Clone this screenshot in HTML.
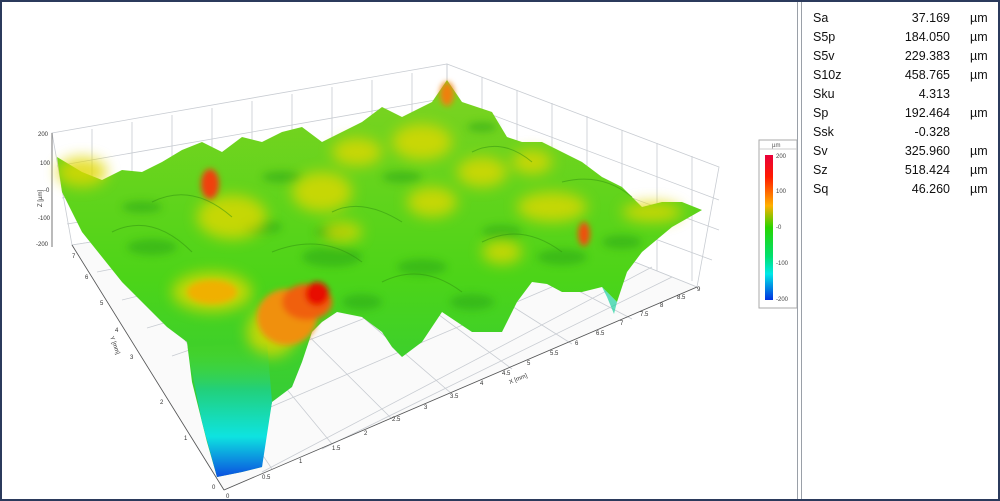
<!DOCTYPE html>
<html><head><meta charset="utf-8"><style>
html,body{margin:0;padding:0;background:#fff;}
#f{position:relative;width:996px;height:497px;border:2px solid #2b3a5c;overflow:hidden;font-family:"Liberation Sans",sans-serif;}
#div{position:absolute;left:795px;top:0;width:3px;height:497px;border-left:1px solid #9aa0a8;border-right:1px solid #9aa0a8;background:#fff;}
table{position:absolute;left:811px;top:6px;border-collapse:collapse;font-size:12.5px;color:#111;}
td{padding:0;height:19px;}
td.n{width:60px}td.v{width:77px;text-align:right}td.u{padding-left:20px}
</style></head><body><div id="f">
<svg width="796" height="497" viewBox="0 0 796 497" style="position:absolute;left:0;top:0">
<defs>
<linearGradient id="g" x1="0" y1="0" x2="0" y2="1"><stop offset="0" stop-color="#7ed321"/><stop offset="0.5" stop-color="#4cd418"/><stop offset="1" stop-color="#27c94a"/></linearGradient>
<linearGradient id="pit" x1="0" y1="0" x2="0" y2="1"><stop offset="0" stop-color="#5ad81f" stop-opacity="0"/><stop offset="0.35" stop-color="#22d07a"/><stop offset="0.7" stop-color="#0ee3e0"/><stop offset="1" stop-color="#0a4fe0"/></linearGradient>
<linearGradient id="cb" x1="0" y1="0" x2="0" y2="1"><stop offset="0" stop-color="#e8003a"/><stop offset="0.15" stop-color="#ff1a00"/><stop offset="0.35" stop-color="#ffb000"/><stop offset="0.5" stop-color="#28d400"/><stop offset="0.7" stop-color="#00e070"/><stop offset="0.82" stop-color="#00e8e8"/><stop offset="1" stop-color="#0030e0"/></linearGradient>
<filter id="b"><feGaussianBlur stdDeviation="7"/></filter>
<filter id="b2"><feGaussianBlur stdDeviation="3"/></filter>
<filter id="b3"><feGaussianBlur stdDeviation="4"/></filter>
</defs>
<g stroke="#c8ccd2" stroke-width="0.8" fill="none">
<polygon points="50,131 445,62 445,185 70,243"/>
<polygon points="445,62 717,165 695,285 445,185"/>
<polygon points="70,243 445,185 695,285 222,488" fill="#fafafa"/>
<path d="M90,127V240 M130,120V234 M170,113V228 M210,106V222 M250,99V216 M290,92V210 M330,85V204 M370,78V198 M410,71V191 M480,75V199 M515,88V213 M550,101V227 M585,114V241 M620,128V255 M655,141V269 M690,154V279"/>
<path d="M55,164L445,96L717,198 M60,196L445,128L717,228 M65,222L445,160L710,258"/>
<path d="M95,270L470,195 M120,298L495,205 M145,326L520,215 M170,354L545,225 M195,382L570,235 M210,430L620,255 M260,470L650,265 M320,447L670,275"/>
<path d="M270,467L110,230 M330,442L150,224 M390,417L190,218 M450,392L240,211 M510,367L290,204 M570,342L340,197 M630,317L390,191"/>
</g>
<g stroke="#555" stroke-width="0.8"><path d="M50,131V245 M222,488L695,285 M70,243L222,488"/></g>
<polygon fill="url(#g)" points="55,155 80,170 100,178 120,168 140,170 160,160 180,148 200,140 220,150 240,135 260,140 280,130 300,125 320,140 340,130 360,120 380,105 400,115 430,100 445,78 460,100 490,110 505,135 520,140 540,140 560,150 580,160 600,175 620,185 640,205 660,200 680,200 700,208 670,225 640,250 625,270 615,300 600,285 580,290 560,290 545,282 530,280 515,300 500,330 485,330 470,330 455,320 440,310 420,340 400,355 390,345 380,330 360,315 335,310 320,320 310,330 300,360 290,385 270,400 262,440 260,465 240,470 215,475 205,440 200,420 190,380 185,340 165,325 150,310 120,280 100,255 80,230 60,190"/>
<g filter="url(#b3)" fill="#2aa818" opacity="0.55">
<ellipse cx="150" cy="245" rx="25" ry="8"/><ellipse cx="260" cy="225" rx="20" ry="7"/><ellipse cx="330" cy="255" rx="30" ry="10"/><ellipse cx="330" cy="230" rx="18" ry="6"/><ellipse cx="420" cy="265" rx="25" ry="8"/><ellipse cx="500" cy="230" rx="20" ry="7"/><ellipse cx="560" cy="255" rx="25" ry="8"/><ellipse cx="620" cy="240" rx="20" ry="7"/><ellipse cx="400" cy="175" rx="20" ry="6"/><ellipse cx="280" cy="175" rx="20" ry="6"/><ellipse cx="480" cy="125" rx="15" ry="5"/><ellipse cx="140" cy="205" rx="20" ry="6"/><ellipse cx="360" cy="300" rx="20" ry="8"/><ellipse cx="470" cy="300" rx="22" ry="8"/>
</g>
<g filter="url(#b)" fill="#e0d800" opacity="0.8">
<ellipse cx="230" cy="215" rx="35" ry="22"/><ellipse cx="320" cy="190" rx="30" ry="20"/><ellipse cx="420" cy="140" rx="30" ry="18"/><ellipse cx="480" cy="170" rx="25" ry="15"/><ellipse cx="430" cy="200" rx="25" ry="15"/><ellipse cx="550" cy="205" rx="35" ry="15"/><ellipse cx="650" cy="210" rx="30" ry="10"/><ellipse cx="210" cy="290" rx="40" ry="20"/><ellipse cx="355" cy="150" rx="25" ry="14"/><ellipse cx="80" cy="170" rx="25" ry="15"/><ellipse cx="530" cy="160" rx="20" ry="12"/><ellipse cx="270" cy="330" rx="25" ry="25"/><ellipse cx="500" cy="250" rx="20" ry="12"/><ellipse cx="340" cy="230" rx="20" ry="10"/>
</g>
<g filter="url(#b2)">
<ellipse cx="208" cy="182" rx="9" ry="15" fill="#f04010"/>
<ellipse cx="285" cy="315" rx="30" ry="28" fill="#f09010"/>
<ellipse cx="305" cy="300" rx="25" ry="18" fill="#f06010"/>
<ellipse cx="315" cy="292" rx="12" ry="12" fill="#e81000"/>
<ellipse cx="445" cy="92" rx="7" ry="12" fill="#f08010"/>
<ellipse cx="582" cy="232" rx="6" ry="12" fill="#f05010"/>
<ellipse cx="210" cy="290" rx="25" ry="12" fill="#f0b000"/>
</g>
<polygon fill="url(#pit)" points="185,345 265,340 270,400 260,465 240,470 215,475 200,420"/>
<polygon fill="#1fd0a0" opacity="0.7" points="600,285 615,300 612,312 605,295" />
<g stroke="#2f9010" stroke-width="1" fill="none" opacity="0.5">
<path d="M110,230Q150,210 190,250 M270,250Q320,230 360,260 M380,280Q420,260 460,290 M480,240Q520,220 560,250 M150,200Q190,180 230,215 M330,210Q360,195 400,220 M470,150Q500,135 530,160 M560,180Q600,170 630,195"/>
</g>
<g font-size="6" fill="#333">
<text x="36" y="134">200</text><text x="38" y="163">100</text><text x="42" y="190">-0</text><text x="36" y="218">-100</text><text x="34" y="244">-200</text>
<text x="70" y="256">7</text><text x="83" y="277">6</text><text x="98" y="303">5</text><text x="113" y="330">4</text><text x="128" y="357">3</text><text x="158" y="402">2</text><text x="182" y="438">1</text><text x="210" y="487">0</text>
<text x="224" y="496">0</text><text x="260" y="477">0.5</text><text x="297" y="461">1</text><text x="330" y="448">1.5</text><text x="362" y="433">2</text><text x="390" y="419">2.5</text><text x="422" y="407">3</text><text x="448" y="396">3.5</text><text x="478" y="383">4</text><text x="500" y="373">4.5</text><text x="525" y="363">5</text><text x="548" y="353">5.5</text><text x="573" y="343">6</text><text x="594" y="333">6.5</text><text x="618" y="323">7</text><text x="638" y="314">7.5</text><text x="658" y="305">8</text><text x="675" y="297">8.5</text><text x="695" y="289">9</text>
<text x="508" y="382" transform="rotate(-22 508 382)">X [mm]</text>
<text x="108" y="335" transform="rotate(70 108 335)">Y [mm]</text>
<text x="40" y="205" transform="rotate(-90 40 205)">Z [µm]</text>
</g>
<rect x="757" y="138" width="38" height="168" fill="#fff" stroke="#aaa"/>
<line x1="757" y1="147" x2="795" y2="147" stroke="#ccc"/>
<text x="770" y="145" font-size="6" fill="#555">µm</text>
<rect x="763" y="153" width="8" height="145" fill="url(#cb)"/>
<g font-size="6" fill="#444"><text x="774" y="156">200</text><text x="774" y="191">100</text><text x="774" y="227">-0</text><text x="774" y="263">-100</text><text x="774" y="299">-200</text></g>
</svg>
<div id="div"></div>
<table>
<tr><td class="n">Sa</td><td class="v">37.169</td><td class="u">µm</td></tr>
<tr><td class="n">S5p</td><td class="v">184.050</td><td class="u">µm</td></tr>
<tr><td class="n">S5v</td><td class="v">229.383</td><td class="u">µm</td></tr>
<tr><td class="n">S10z</td><td class="v">458.765</td><td class="u">µm</td></tr>
<tr><td class="n">Sku</td><td class="v">4.313</td><td class="u"></td></tr>
<tr><td class="n">Sp</td><td class="v">192.464</td><td class="u">µm</td></tr>
<tr><td class="n">Ssk</td><td class="v">-0.328</td><td class="u"></td></tr>
<tr><td class="n">Sv</td><td class="v">325.960</td><td class="u">µm</td></tr>
<tr><td class="n">Sz</td><td class="v">518.424</td><td class="u">µm</td></tr>
<tr><td class="n">Sq</td><td class="v">46.260</td><td class="u">µm</td></tr>
</table>
</div></body></html>
